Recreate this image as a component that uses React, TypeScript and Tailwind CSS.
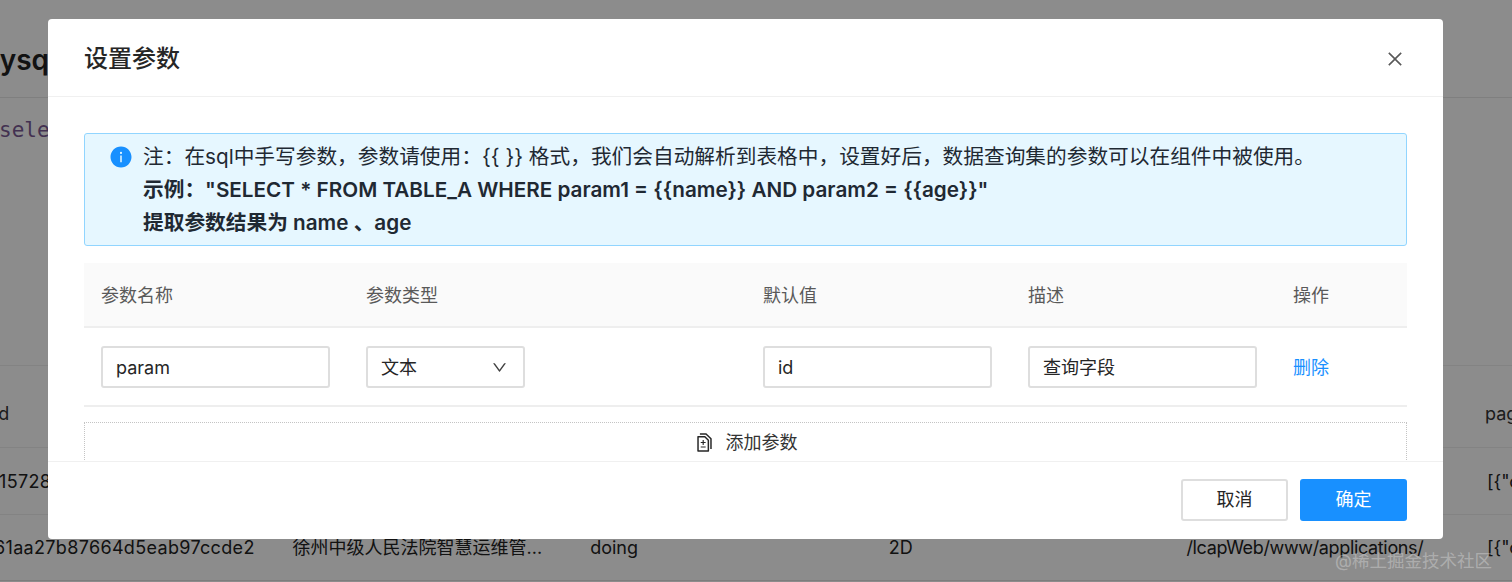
import { AiFillInfoCircle, AiOutlineClose, AiOutlineDiff, AiOutlineDown } from "react-icons/ai";

const font = { fontFamily: 'Inter, "Noto Sans CJK SC", sans-serif' };

function Input({ value, className }: { value: string; className: string }) {
  return (
    <div className={`h-[42px] border-2 border-[#dedede] rounded-[3px] bg-white flex items-center pl-[13px] pt-[2px] text-[18px] text-[#262626] ${className}`}>
      {value}
    </div>
  );
}

function BgCell({ children }: { children?: React.ReactNode }) {
  return <div className="pl-[17px] whitespace-nowrap overflow-hidden">{children}</div>;
}

export default function App() {
  return (
    <div className="relative w-[1512px] h-[582px] overflow-hidden bg-white" style={font}>
      {/* page behind the dialog */}
      <div className="flex flex-col h-full">
        <div className="h-[98px] shrink-0 border-b border-[#e8e8e8] flex items-center pt-[22px] text-[28px] font-semibold text-[#222] -ml-[25px]">
          mysql
        </div>
        <div className="h-[267px] shrink-0 pt-[17px] -ml-[1px] text-[21px] text-[#7a5a94]" style={{ fontFamily: '"DejaVu Sans Mono", monospace' }}>
          select
        </div>
        <div className="grid grid-cols-[repeat(6,298.6px)] -ml-[23px] h-[83px] shrink-0 items-center border-y border-[#eeeeee] pt-[14px] text-[18px] text-[#333]">
          <BgCell>id</BgCell>
          <BgCell />
          <BgCell />
          <BgCell />
          <BgCell />
          <BgCell>
            <span className="-ml-[2px]">page</span>
          </BgCell>
        </div>
        <div className="grid grid-cols-[repeat(6,298.6px)] -ml-[23px] h-[67px] shrink-0 items-center border-b border-[#eeeeee] text-[18px] text-[#222]">
          <BgCell>
            <span className="ml-[5px] tracking-[0.33px]">157282e87664d5eab97ccde2</span>
          </BgCell>
          <BgCell />
          <BgCell />
          <BgCell />
          <BgCell />
          <BgCell>{'[{"c'}</BgCell>
        </div>
        <div className="grid grid-cols-[repeat(6,298.6px)] -ml-[23px] h-[66px] shrink-0 items-center border-b border-[#e4e4e4] text-[18px] text-[#222]">
          <BgCell>
            <span className="tracking-[0.33px]">61aa27b87664d5eab97ccde2</span>
          </BgCell>
          <BgCell>徐州中级人民法院智慧运维管...</BgCell>
          <BgCell>
            <span className="-ml-[1px]">doing</span>
          </BgCell>
          <BgCell>
            <span className="-ml-[1px]">2D</span>
          </BgCell>
          <BgCell>
            <span className="-ml-[2px] tracking-[-0.35px]">/lcapWeb/www/applications/</span>
          </BgCell>
          <BgCell>{'[{"c'}</BgCell>
        </div>
      </div>

      {/* mask */}
      <div className="absolute inset-0 bg-black/45" />

      {/* dialog */}
      <div className="absolute inset-0 pt-[19px] pl-[48px]">
        <div className="w-[1395px] h-[520px] bg-white rounded-[4px] flex flex-col overflow-hidden">
          <div className="h-[78px] shrink-0 border-b border-[#f0f0f0] flex items-center justify-between pl-[36px] pr-[38px]">
            <span className="text-[24px] font-medium text-[#262626] leading-none pt-[3px]">设置参数</span>
            <AiOutlineClose className="text-[#595959] mt-[2px]" size={20} />
          </div>

          <div className="h-[364px] shrink-0 overflow-hidden px-[36px] pt-[36px]">
            <div className="h-[113px] border border-[#91d5ff] bg-[#e6f7ff] rounded-[3px] flex pl-[24px] pt-[6px] text-[20.7px] leading-[33px] text-[#1f2933]">
              <AiFillInfoCircle className="text-[#1890ff] mt-[5px] mr-[10px] shrink-0" size={24} />
              <div>
                <div className="whitespace-nowrap">注：在sql中手写参数，参数请使用：{"{{ }}"} 格式，我们会自动解析到表格中，设置好后，数据查询集的参数可以在组件中被使用。</div>
                <div className="whitespace-nowrap font-semibold">示例："SELECT * FROM TABLE_A WHERE param1 = {"{{name}}"} AND param2 = {"{{age}}"}"</div>
                <div className="whitespace-nowrap font-semibold">提取参数结果为 name 、age</div>
              </div>
            </div>

            <div className="mt-[17px] grid grid-cols-[265px_397px_265px_265px_1fr] h-[65px] items-center bg-[#fafafa] border-b-2 border-[#eeeeee] text-[18px] text-[#595959]">
              <div className="pl-[17px] pt-[2px]">参数名称</div>
              <div className="pl-[17px] pt-[2px]">参数类型</div>
              <div className="pl-[17px] pt-[2px]">默认值</div>
              <div className="pl-[17px] pt-[2px]">描述</div>
              <div className="pl-[17px] pt-[2px]">操作</div>
            </div>

            <div className="grid grid-cols-[265px_397px_265px_265px_1fr] h-[79px] items-center border-b-2 border-[#eeeeee] text-[18px]">
              <div className="pl-[17px]">
                <Input value="param" className="w-[229px]" />
              </div>
              <div className="pl-[17px]">
                <div className="w-[159px] h-[42px] border-2 border-[#dedede] rounded-[3px] flex items-center justify-between pl-[13px] pr-[15px] pt-[2px] text-[#262626]">
                  文本
                  <AiOutlineDown className="text-[#404040]" size={17} />
                </div>
              </div>
              <div className="pl-[17px]">
                <Input value="id" className="w-[229px]" />
              </div>
              <div className="pl-[17px]">
                <Input value="查询字段" className="w-[229px]" />
              </div>
              <div className="pl-[17px] pt-[2px] text-[#1890ff]">删除</div>
            </div>

            <div className="mt-[15px] h-[40px] border border-dotted border-[#c4c4c4] flex items-center justify-center gap-[11px] text-[18px] text-[#333]">
              <AiOutlineDiff className="text-[#262626]" size={21} />
              添加参数
            </div>
          </div>

          <div className="flex-1 border-t border-[#f0f0f0] flex items-center justify-end gap-[12px] pr-[36px] pb-[2px] text-[18px]">
            <div className="w-[107px] h-[42px] border-2 border-[#dedede] rounded-[3px] flex items-center justify-center text-[#262626]">取消</div>
            <div className="w-[107px] h-[42px] rounded-[3px] bg-[#1890ff] flex items-center justify-center text-white">确定</div>
          </div>
        </div>
      </div>

      {/* watermark */}
      <div className="absolute left-[1335px] top-[548px] text-[17.5px] text-white/30 whitespace-nowrap">@稀土掘金技术社区</div>
    </div>
  );
}
